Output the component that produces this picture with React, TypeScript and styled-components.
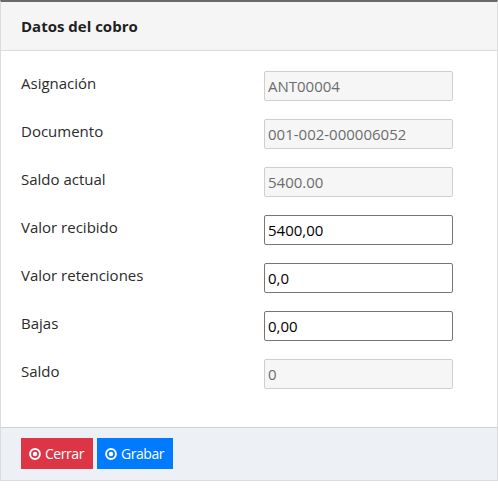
import React from "react";
import styled, { createGlobalStyle } from "styled-components";

const Global = createGlobalStyle`
  html, body { margin: 0; padding: 0; background: #fff; }
  body { font-family: "Open Sans", "Noto Sans", sans-serif; color: #212529; }
  * { box-sizing: border-box; }
`;

const Card = styled.div`
  width: 498px;
  border: 1px solid #dcdcdc;
  border-top: 2px solid #6b6b6b;
  background: #fff;
`;

const Header = styled.div`
  height: 49px;
  background: #f5f5f5;
  border-bottom: 1px solid #dcdcdc;
  padding: 0 20px;
  display: flex;
  align-items: center;
`;

const Title = styled.h3`
  margin: 0;
  font-size: 15px;
  font-weight: 700;
  color: #1f1f1f;
`;

const Body = styled.div`
  padding: 20px 20px 38px;
  display: flex;
  flex-direction: column;
  gap: 18px;
`;

const Row = styled.div`
  display: grid;
  grid-template-columns: 243px 189px;
  align-items: start;
`;

const Label = styled.label`
  font-size: 15px;
  line-height: 24px;
  color: #2b2b2b;
`;

const Input = styled.input<{ $readOnly?: boolean }>`
  width: 189px;
  height: 30px;
  padding: 0 3px;
  font-family: inherit;
  font-size: 15px;
  border-radius: 2px;
  outline: none;
  border: 1px solid ${(p) => (p.$readOnly ? "#cfcfcf" : "#767676")};
  background: ${(p) => (p.$readOnly ? "#f6f6f6" : "#fff")};
  color: ${(p) => (p.$readOnly ? "#6d6d6d" : "#000")};
`;

const Footer = styled.div`
  background: #edf1f5;
  border-top: 1px solid #cfd3d7;
  padding: 10px 20px 11px;
  display: flex;
  gap: 4px;
`;

const Button = styled.button<{ $variant: "danger" | "primary" }>`
  height: 31px;
  padding: 0 9px 0 8px;
  border: none;
  border-radius: 0;
  display: flex;
  align-items: center;
  gap: 4px;
  font-family: inherit;
  font-size: 14px;
  letter-spacing: -0.45px;
  color: #fff;
  background: ${(p) => (p.$variant === "danger" ? "#dc3545" : "#007bff")};
  cursor: pointer;
`;

const DotCircle = () => (
  <svg width="12" height="12" viewBox="0 0 12 12" aria-hidden="true">
    <circle cx="6" cy="6" r="4.9" fill="none" stroke="#fff" strokeWidth="2" />
    <circle cx="6" cy="6" r="2.2" fill="#fff" />
  </svg>
);

const fields: { label: string; value: string; readOnly: boolean }[] = [
  { label: "Asignación", value: "ANT00004", readOnly: true },
  { label: "Documento", value: "001-002-000006052", readOnly: true },
  { label: "Saldo actual", value: "5400.00", readOnly: true },
  { label: "Valor recibido", value: "5400,00", readOnly: false },
  { label: "Valor retenciones", value: "0,0", readOnly: false },
  { label: "Bajas", value: "0,00", readOnly: false },
  { label: "Saldo", value: "0", readOnly: true },
];

export default function App() {
  return (
    <>
      <Global />
      <Card>
        <Header>
          <Title>Datos del cobro</Title>
        </Header>
        <Body>
          {fields.map((f) => (
            <Row key={f.label}>
              <Label>{f.label}</Label>
              <Input
                $readOnly={f.readOnly}
                readOnly={f.readOnly}
                defaultValue={f.value}
              />
            </Row>
          ))}
        </Body>
        <Footer>
          <Button $variant="danger">
            <DotCircle />
            Cerrar
          </Button>
          <Button $variant="primary">
            <DotCircle />
            Grabar
          </Button>
        </Footer>
      </Card>
    </>
  );
}
